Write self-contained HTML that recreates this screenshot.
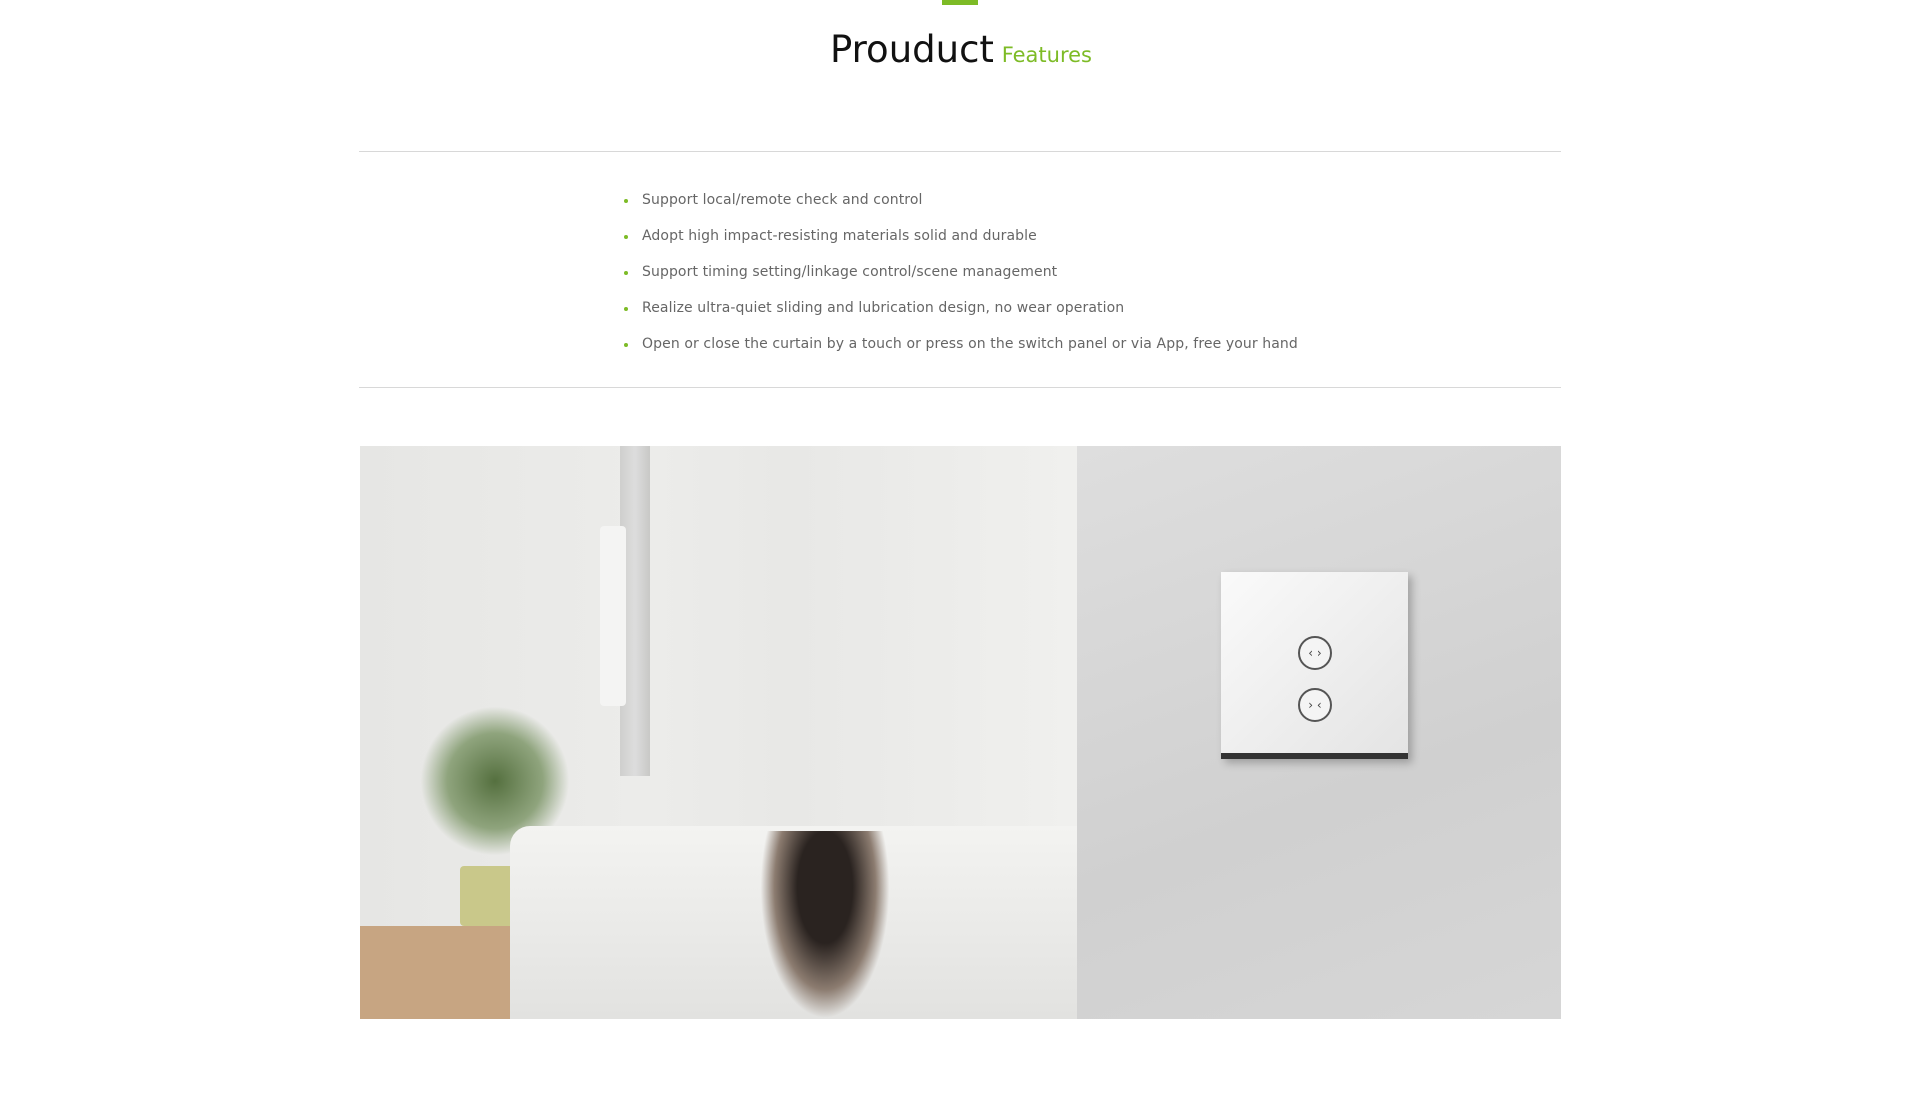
<!DOCTYPE html>
<html><head><style>
body{margin:0;background:#fff;width:1920px;height:1100px;position:relative;font-family:"DejaVu Sans","Liberation Sans",sans-serif;overflow:hidden}
.bar{position:absolute;left:942px;top:0;width:36px;height:5px;background:#7dbb26}
.title{position:absolute;left:830px;top:28px;font-size:37px;color:#111;white-space:nowrap}
.title span{font-size:21px;color:#7dbb26;margin-left:-4px}
.line{position:absolute;left:359px;width:1202px;height:1px;background:#d8d8d8}
ul{position:absolute;left:620px;top:187px;margin:0;padding:0;list-style:none}
li{font-size:14px;color:#666;height:36px;line-height:26px;position:relative;padding-left:22px;letter-spacing:0.1px}
li:before{content:"";position:absolute;left:4px;top:12px;width:4px;height:4px;border-radius:50%;background:#7dbb26}
.img{position:absolute;top:446px;height:573px}
</style></head><body>
<div class="bar"></div>
<div class="title">Prouduct <span>Features</span></div>
<div class="line" style="top:151px"></div>
<ul>
<li>Support local/remote check and control</li>
<li>Adopt high impact-resisting materials solid and durable</li>
<li>Support timing setting/linkage control/scene management</li>
<li>Realize ultra-quiet sliding and lubrication design, no wear operation</li>
<li>Open or close the curtain by a touch or press on the switch panel or via App, free your hand</li>
</ul>
<div class="line" style="top:387px"></div>
<div class="img" style="left:360px;width:717px;background:linear-gradient(90deg,#e6e6e4 0%,#ececea 40%,#e8e8e6 60%,#f0f0ee 100%)">
 <div style="position:absolute;left:260px;top:0;width:30px;height:330px;background:linear-gradient(90deg,#cfcfcd,#ddd,#c8c8c6)"></div>
 <div style="position:absolute;left:240px;top:80px;width:26px;height:180px;background:#f4f4f3;border-radius:4px"></div>
 <div style="position:absolute;left:60px;top:260px;width:150px;height:150px;border-radius:50%;background:radial-gradient(#55703f,#8fa47d 45%,rgba(200,210,190,0) 70%)"></div>
 <div style="position:absolute;left:100px;top:420px;width:55px;height:60px;background:#c9c88a;border-radius:4px"></div>
 <div style="position:absolute;left:0;top:480px;width:160px;height:93px;background:#c7a582"></div>
 <div style="position:absolute;left:150px;top:380px;width:567px;height:193px;background:linear-gradient(#f3f3f1,#e2e2e0);border-radius:20px 0 0 0"></div>
 <div style="position:absolute;left:400px;top:385px;width:130px;height:188px;background:radial-gradient(ellipse at 50% 30%,#2a2320 30%,#8c7c70 55%,transparent 70%)"></div>
</div>
<div class="img" style="left:1077px;width:484px;background:linear-gradient(160deg,#dedede,#d0d0d0 60%,#d6d6d6)">
 <div style="position:absolute;left:144px;top:126px;width:187px;height:187px;background:linear-gradient(135deg,#fafafa,#e4e4e4);box-shadow:4px 4px 8px rgba(0,0,0,.25);border-bottom:6px solid #333;box-sizing:border-box">
  <div style="position:absolute;left:77px;top:64px;width:34px;height:34px;border-radius:50%;border:2px solid #555;background:#f4f4f4;box-sizing:border-box;font-size:12px;text-align:center;line-height:30px;color:#444">‹ ›</div>
  <div style="position:absolute;left:77px;top:116px;width:34px;height:34px;border-radius:50%;border:2px solid #555;background:#f4f4f4;box-sizing:border-box;font-size:12px;text-align:center;line-height:30px;color:#444">› ‹</div>
 </div>
</div>
</body></html>
